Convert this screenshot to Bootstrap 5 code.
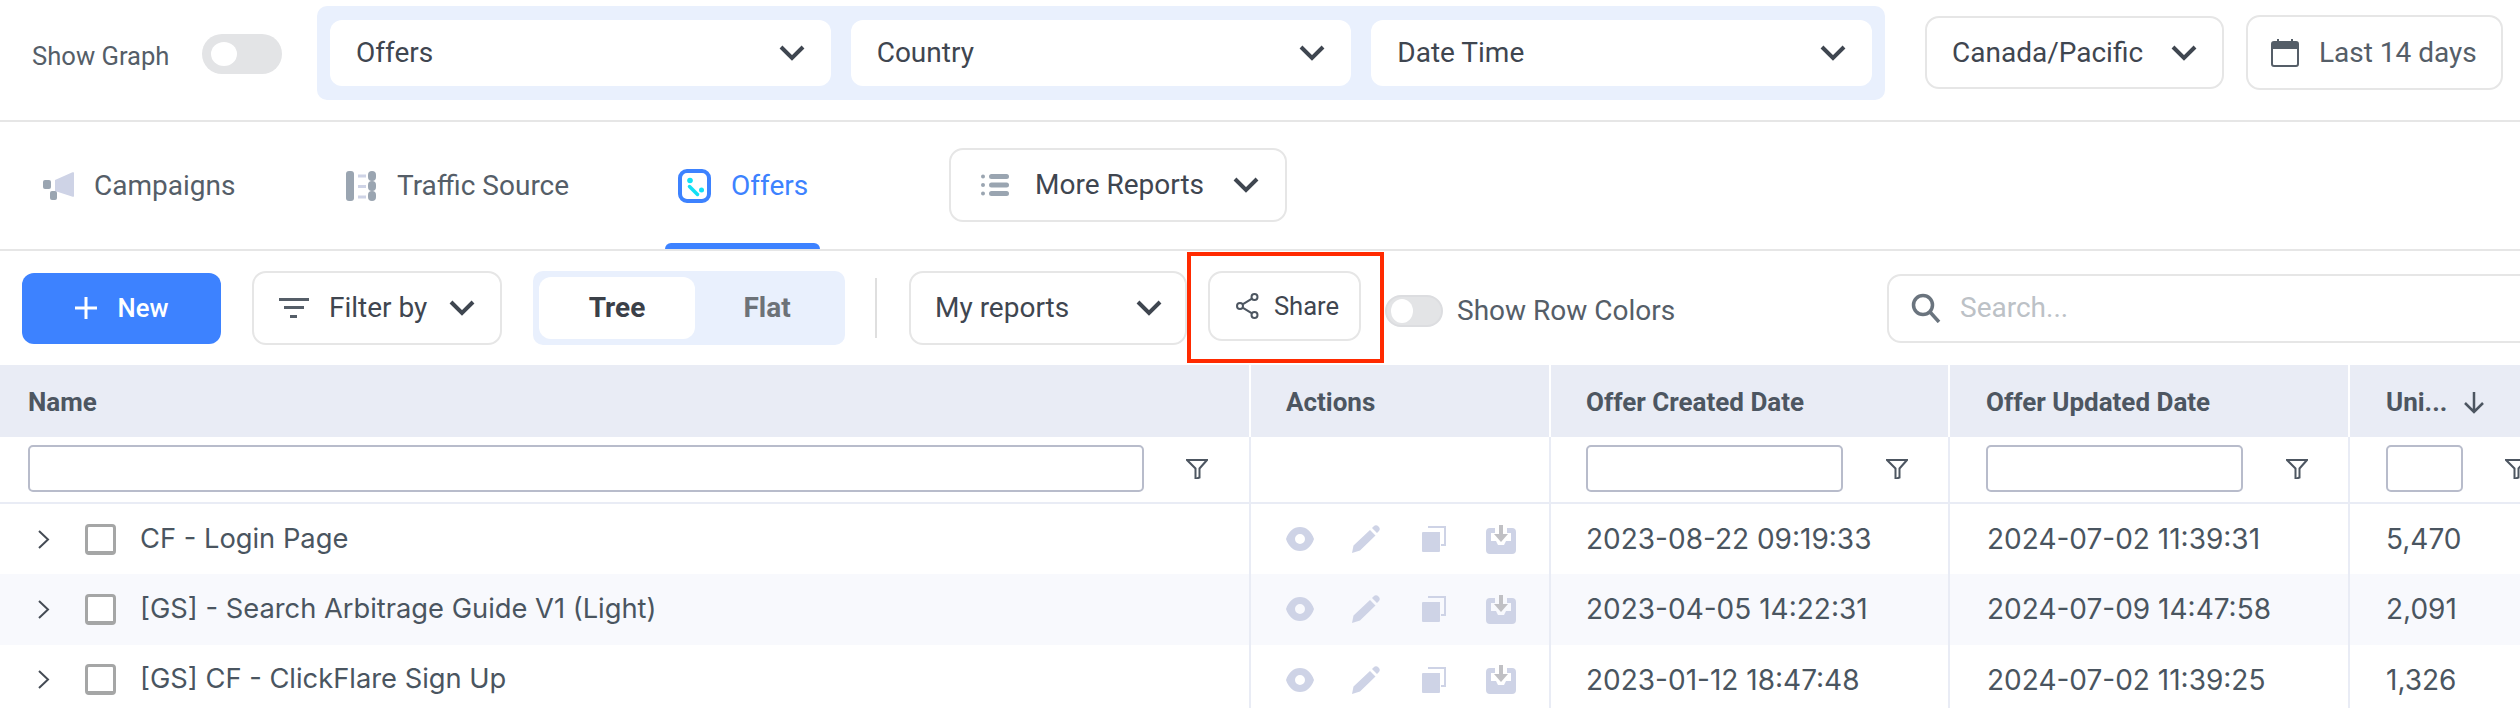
<!DOCTYPE html>
<html lang="en">
<head>
  <meta charset="UTF-8">
  <meta name="viewport" content="width=device-width, initial-scale=1.0">
  <title>Offers</title>
  <link href="https://cdn.jsdelivr.net/npm/bootstrap@5.3.0/dist/css/bootstrap.min.css" rel="stylesheet">
  <style>
    html, body { height: 708px; overflow: hidden; }
    body { font-family: Roboto, "Liberation Sans", sans-serif; font-size: 28px; color: #3f4650; background: #fff; width: 2520px; }

    /* top bar */
    .top-bar { height: 122px; padding: 6px 0 0 32px; border-bottom: 2px solid #e6e6e6; }
    .graph-label { width: 138px; font-size: 25.6px; color: #555e68; margin-top: 35px; line-height: 30px; white-space: nowrap; }
    .pill-switch { display: block; background: #e3e4e6; border-radius: 20px; position: relative; flex-shrink: 0; }
    .pill-switch::before { content: ""; position: absolute; background: #fff; border-radius: 50%; }
    .pill-lg { width: 80px; height: 40px; margin: 28px 0 0 32px; }
    .pill-lg::before { left: 9px; top: 8px; width: 26px; height: 24px; }
    .pill-sm { width: 58px; height: 32px; border: 2px solid #dcdde0; margin: 6px 0 0 0; }
    .pill-sm::before { left: 4px; top: 2px; width: 22px; height: 24px; }
    .filter-panel { width: 1568px; height: 94px; margin-left: 35px; padding: 14px 13px; gap: 20px; background: #e9f0fd; border-radius: 10px; }
    .filter-select { flex: 1 1 0; height: 66px; padding: 0 26px; background: #fff; border-radius: 12px; }

    .box-btn { background: #fff; border: 2px solid #e6e6e6; border-radius: 14px; color: #3f4650; font-size: 28px; padding: 0; line-height: 32px; flex-shrink: 0; white-space: nowrap; }
    .box-btn:hover { background: #fff; border-color: #e6e6e6; color: #3f4650; }
    .zone-btn { width: 299px; height: 73px; margin: 10px 0 0 40px; padding: 0 25px; }
    .range-btn { width: 257px; height: 75px; margin: 9px 0 0 22px; padding-left: 23px; color: #555e68; }
    .range-btn svg { margin-right: 20px; }

    /* report tabs */
    .tab-bar { height: 129px; padding-left: 30px; border-bottom: 2px solid #e6e6e6; }
    .tab-link { position: relative; height: 127px; padding: 0 13px; color: #555e68; font-size: 28px; white-space: nowrap; }
    .tab-link:hover { color: #555e68; }
    .tab-link svg { margin-right: 20px; flex-shrink: 0; }
    .tab-link.active, .tab-link.active:hover { color: #3d82ff; }
    .tab-link.active::after { content: ""; position: absolute; left: 0; right: 0; bottom: 0; height: 6px; background: #3d82ff; border-radius: 6px 6px 0 0; }
    .tab-campaigns { width: 218px; }
    .tab-traffic { width: 249px; margin-left: 85px; }
    .tab-traffic svg { margin-right: 21px; }
    .tab-offers { width: 155px; margin-left: 83px; }
    .more-btn { width: 338px; height: 74px; margin: 26px 0 0 129px; padding: 0 26px 0 30px; }
    .more-btn svg:first-child { margin-right: 26px; }

    /* toolbar */
    .tool-bar { height: 114px; padding-left: 22px; overflow: hidden; }
    .new-btn { width: 199px; height: 71px; background: #3d82ff; border: 0; border-radius: 12px; color: #fff; font-size: 25.6px; font-weight: 500; gap: 21px; }
    .new-btn:hover { background: #3d82ff; color: #fff; }
    .filter-btn { width: 250px; height: 74px; margin-left: 31px; padding: 0 25px; }
    .filter-btn svg:first-child { margin-right: 20px; }
    .view-switch { width: 312px; height: 74px; margin-left: 31px; padding: 6px; background: #e9f0fd; border-radius: 10px; }
    .view-opt { flex: 1 1 0; border-radius: 12px; font-weight: 700; font-size: 28px; color: #6d7278; }
    .view-opt.on { flex: 0 0 156px; background: #fff; color: #3b4048; }
    .tool-sep { width: 2px; height: 60px; margin-left: 30px; background: #dfdfdf; }
    .reports-btn { width: 278px; height: 74px; margin-left: 32px; padding: 0 23px 0 24px; }
    .share-wrap { position: relative; margin: -4px 0 0 21px; flex-shrink: 0; }
    .share-btn { width: 153px; height: 70px; font-size: 25.6px; gap: 15px; padding-left: 6px; }
    .red-mark { position: absolute; left: -21px; top: -19px; width: 197px; height: 111px; border: 4px solid #ff2a00; pointer-events: none; }
    .row-colors { width: 288px; margin-left: 24px; }
    .row-colors span { font-size: 28px; color: #555e68; margin: 6px 0 0 14px; white-space: nowrap; }
    .search-box { width: 700px; height: 69px; margin-left: 214px; padding-left: 22px; border: 2px solid #e6e6e6; border-radius: 14px; gap: 19px; flex-shrink: 0; }
    .search-box input { border: 0; outline: 0; padding: 0; font-size: 28px; width: 400px; color: #3f4650; }
    .search-box input::placeholder { color: #bcc1c6; }

    /* report table */
    .report-table { table-layout: fixed; width: 2520px; margin: 0; border-collapse: separate; border-spacing: 0; --bs-table-bg: transparent; }
    .report-table > :not(caption) > * > * { padding: 0; border: 0; box-shadow: none; vertical-align: middle; }
    .report-table thead tr.head-row th { height: 72px; background: #e9ecf5; color: #4d5661; font-size: 26px; font-weight: 700; padding: 3px 0 0 35px; border-left: 2px solid #fff; }
    .report-table thead tr.head-row th:first-child { padding-left: 28px; border-left: 0; }
    .report-table thead tr.head-row th:nth-child(4), .report-table thead tr.head-row th:last-child { padding-left: 36px; }
    .report-table tr.find-row td { height: 67px; border-bottom: 2px solid #e9ecf5; border-left: 2px solid #e9ecf5; padding: 0 0 2px 36px; }
    .report-table tr.find-row td:first-child { border-left: 0; padding-left: 28px; }
    .report-table tr.find-row td:nth-child(3) { padding-left: 35px; }
    .find-input { height: 47px; border: 2px solid #b8bccb; border-radius: 5px; padding: 0 8px; background: #fff; flex-shrink: 0; }
    .find-input:focus { box-shadow: none; border-color: #b8bccb; }
    .find-name { width: 1116px; margin-right: 42px; }
    .find-date { width: 257px; margin-right: 43px; }
    .find-unit { width: 77px; margin-right: 42px; }
    .funnel { flex-shrink: 0; }
    .report-table tbody td { height: 70.3px; font-family: Inter, "Liberation Sans", sans-serif; font-size: 28px; color: #4a5560; border-left: 2px solid #e9ecf5; padding-left: 37px; white-space: nowrap; }
    .report-table tbody tr:nth-child(even) td { background: #f8f9fd; }
    .report-table tbody td:first-child { border-left: 0; padding-left: 37px; }
    .report-table tbody td:nth-child(2), .report-table tbody td:nth-child(3) { padding-left: 35px; }
    .report-table tbody td:last-child { padding-left: 36px; }
    .row-name { font-size: 27.3px; }
    .row-check { width: 31px; height: 31px; border: 3px solid #a5a6a6; border-bottom-width: 4px; border-radius: 4px; margin: 0 24px 0 35px; background: #fff; flex-shrink: 0; }
    .act-icons { gap: 38px; }
    .act-icons svg:nth-child(3) { margin-left: 4px; }
    .act-icons svg:nth-child(4) { margin-left: 2px; }
  </style>
</head>
<body>
  <svg width="0" height="0" class="position-absolute">
    <defs>
      <symbol id="chev" viewBox="0 0 26 16"><path d="M2 2l11 11L24 2" fill="none" stroke="#3f4650" stroke-width="4"/></symbol>
      <symbol id="funnel" viewBox="0 0 22 20"><path d="M1 1h20l-7.500 8.500v9l-4 1.500V9.500z" fill="none" stroke="#4d5661" stroke-width="2"/></symbol>
      <symbol id="eye" viewBox="0 0 28 24"><path fill="#ced3e6" fill-rule="evenodd" d="M14 0C7.500 0 2.500 4.500 0 12c2.500 7.500 7.500 12 14 12s11.500-4.500 14-12C25.500 4.500 20.500 0 14 0zm0 7a5 5 0 110 10 5 5 0 010-10z"/></symbol>
      <symbol id="pen" viewBox="0 0 28 28"><path fill="#ced3e6" d="M18 5l5.500 5.500L8 25.500 0 28l1.500-7.500zM20 3l1.500-1.500a3.500 3.500 0 015 0 3.500 3.500 0 010 5L25 8z"/></symbol>
      <symbol id="copy" viewBox="0 0 24 26"><path fill="#ced3e6" d="M6 0h18v20h-5V18h3V2H6z"/><path fill="#ced3e6" d="M0 7a1 1 0 011-1h17v19a1 1 0 01-1 1H1a1 1 0 01-1-1z"/></symbol>
      <symbol id="inbox" viewBox="0 0 30 29"><path fill="#ced3e6" d="M4 3h5v5H5v8h5l2 4h6l2-4h5V8h-4V3h5a4 4 0 014 4v18a4 4 0 01-4 4H4a4 4 0 01-4-4V7a4 4 0 014-4z"/><path fill="#c0c0c4" d="M13 0h4v9h5l-7 8-7-8h5z"/></symbol>
    </defs>
  </svg>

  <div class="top-bar d-flex align-items-start">
    <span class="graph-label">Show Graph</span>
    <span class="pill-switch pill-lg"></span>
    <div class="filter-panel d-flex">
      <div class="filter-select d-flex align-items-center justify-content-between"><span>Offers</span><svg width="26" height="16"><use href="#chev"/></svg></div>
      <div class="filter-select d-flex align-items-center justify-content-between"><span>Country</span><svg width="26" height="16"><use href="#chev"/></svg></div>
      <div class="filter-select d-flex align-items-center justify-content-between"><span>Date Time</span><svg width="26" height="16"><use href="#chev"/></svg></div>
    </div>
    <button class="btn box-btn zone-btn d-flex align-items-center justify-content-between"><span>Canada/Pacific</span><svg width="26" height="16"><use href="#chev"/></svg></button>
    <button class="btn box-btn range-btn d-flex align-items-center">
      <svg width="28" height="28" viewBox="0 0 28 28"><rect x="1" y="3" width="26" height="24" rx="2" fill="none" stroke="#555e68" stroke-width="2"/><path fill="#555e68" d="M1 3h26v7H1zM6 0h2v3H6zM20 0h2v3h-2z"/></svg>
      <span>Last 14 days</span>
    </button>
  </div>

  <div class="tab-bar d-flex align-items-start">
    <a class="tab-link tab-campaigns d-flex align-items-center text-decoration-none" href="#">
      <svg width="31" height="28" viewBox="0 0 31 28"><path fill="#ced3e6" d="M12 8L29.500 .3a1 1 0 011.500 1v22.400a1 1 0 01-1.300 1L12 19z"/><rect y="8" width="8" height="9" rx="2" fill="#9aa5b1"/><rect x="7" y="19" width="7" height="9" rx="2" fill="#9aa5b1"/></svg>
      Campaigns
    </a>
    <a class="tab-link tab-traffic d-flex align-items-center text-decoration-none" href="#">
      <svg width="30" height="30" viewBox="0 0 30 30"><rect width="8" height="30" rx="3" fill="#9aa5b1"/><rect x="22" width="8" height="10" rx="4" fill="#9aa5b1"/><rect x="22" y="10" width="8" height="10" rx="4" fill="#9aa5b1"/><rect x="22" y="20" width="8" height="10" rx="4" fill="#9aa5b1"/><path fill="#ced3e6" d="M12 3.500h8v3h-8zM12 14h8v3h-8zM12 24.500h8v3h-8z"/></svg>
      Traffic Source
    </a>
    <a class="tab-link tab-offers active d-flex align-items-center text-decoration-none" href="#">
      <svg width="33" height="34" viewBox="0 0 33 34"><rect x="2" y="2" width="29" height="30" rx="7" fill="#fff" stroke="#3d82ff" stroke-width="4"/><path d="M11.500 17.500l8 8" stroke="#12e0f5" stroke-width="3.500" stroke-linecap="round" fill="none"/><circle cx="12" cy="11.500" r="2.800" fill="#12e0f5"/><circle cx="23.500" cy="21" r="2.500" fill="#12e0f5"/></svg>
      Offers
    </a>
    <button class="btn box-btn more-btn d-flex align-items-center">
      <svg width="28" height="22" viewBox="0 0 28 22"><g fill="#9aa5b1"><circle cx="2" cy="2.500" r="2"/><circle cx="2" cy="11" r="2"/><circle cx="2" cy="19.500" r="2"/><rect x="8" width="20" height="5" rx="2.500"/><rect x="8" y="8.500" width="20" height="5" rx="2.500"/><rect x="8" y="17" width="20" height="5" rx="2.500"/></g></svg>
      <span class="me-auto">More Reports</span>
      <svg width="26" height="16"><use href="#chev"/></svg>
    </button>
  </div>

  <div class="tool-bar d-flex align-items-center">
    <button class="btn new-btn d-flex align-items-center justify-content-center flex-shrink-0">
      <svg width="22" height="22" viewBox="0 0 22 22"><path d="M11 0v22M0 11h22" stroke="#fff" stroke-width="3"/></svg>
      New
    </button>
    <button class="btn box-btn filter-btn d-flex align-items-center">
      <svg width="30" height="21" viewBox="0 0 30 21"><path fill="#555e68" d="M0 0h30v3H0zM5 8h20v3H5zM11 17h7v3h-7z"/></svg>
      <span class="me-auto">Filter by</span>
      <svg width="26" height="16"><use href="#chev"/></svg>
    </button>
    <div class="view-switch d-flex flex-shrink-0">
      <div class="view-opt on d-flex align-items-center justify-content-center">Tree</div>
      <div class="view-opt d-flex align-items-center justify-content-center">Flat</div>
    </div>
    <div class="tool-sep flex-shrink-0"></div>
    <button class="btn box-btn reports-btn d-flex align-items-center justify-content-between"><span>My reports</span><svg width="26" height="16"><use href="#chev"/></svg></button>
    <div class="share-wrap">
      <button class="btn box-btn share-btn d-flex align-items-center justify-content-center">
        <svg width="23" height="26" viewBox="0 0 23 26"><g fill="none" stroke="#4d5661" stroke-width="2"><circle cx="18.500" cy="4" r="3"/><circle cx="4" cy="13" r="3"/><circle cx="18.500" cy="22" r="3"/><path d="M7 11.200l9-5.500M7 14.800l9 5.500"/></g></svg>
        Share
      </button>
      <span class="red-mark"></span>
    </div>
    <div class="row-colors d-flex align-items-center flex-shrink-0">
      <div class="pill-switch pill-sm"></div>
      <span>Show Row Colors</span>
    </div>
    <div class="search-box d-flex align-items-center">
      <svg width="30" height="30" viewBox="0 0 30 30"><circle cx="12" cy="12" r="9.500" fill="none" stroke="#6a747e" stroke-width="3.500"/><path d="M19 19l9 10" stroke="#6a747e" stroke-width="3.500"/></svg>
      <input type="text" placeholder="Search...">
    </div>
  </div>

  <table class="table report-table">
    <colgroup><col style="width:1249px"><col style="width:300px"><col style="width:399px"><col style="width:400px"><col style="width:172px"></colgroup>
    <thead>
      <tr class="head-row">
        <th>Name</th>
        <th>Actions</th>
        <th>Offer Created Date</th>
        <th>Offer Updated Date</th>
        <th>
          <div class="d-flex align-items-center">Uni...
            <svg width="22" height="22" viewBox="0 0 22 22" class="ms-3"><path d="M11 0v20M2 11l9 9 9-9" fill="none" stroke="#4d5661" stroke-width="2.500"/></svg>
          </div>
        </th>
      </tr>
      <tr class="find-row">
        <td><div class="d-flex align-items-center"><input class="form-control find-input find-name"><svg class="funnel" width="22" height="20"><use href="#funnel"/></svg></div></td>
        <td></td>
        <td><div class="d-flex align-items-center"><input class="form-control find-input find-date"><svg class="funnel" width="22" height="20"><use href="#funnel"/></svg></div></td>
        <td><div class="d-flex align-items-center"><input class="form-control find-input find-date"><svg class="funnel" width="22" height="20"><use href="#funnel"/></svg></div></td>
        <td><div class="d-flex align-items-center"><input class="form-control find-input find-unit"><svg class="funnel" width="22" height="20"><use href="#funnel"/></svg></div></td>
      </tr>
    </thead>
    <tbody id="rows"></tbody>
  </table>

  <script>
    // rows of the report
    const offers = [
      { name: 'CF - Login Page', created: '2023-08-22 09:19:33', updated: '2024-07-02 11:39:31', unique: '5,470' },
      { name: '[GS] - Search Arbitrage Guide V1 (Light)', created: '2023-04-05 14:22:31', updated: '2024-07-09 14:47:58', unique: '2,091' },
      { name: '[GS] CF - ClickFlare Sign Up', created: '2023-01-12 18:47:48', updated: '2024-07-02 11:39:25', unique: '1,326' }
    ];
    const svg = (id, w, h) => `<svg width="${w}" height="${h}"><use href="#${id}"/></svg>`;
    document.getElementById('rows').innerHTML = offers.map(o => `
      <tr>
        <td><div class="d-flex align-items-center">
          <svg width="13" height="19" viewBox="0 0 13 19" class="flex-shrink-0"><path d="M2 1l9 8.500-9 8.500" fill="none" stroke="#444b54" stroke-width="2"/></svg>
          <span class="row-check"></span><span class="row-name">${o.name}</span>
        </div></td>
        <td><div class="d-flex align-items-center act-icons">${svg('eye', 28, 24)}${svg('pen', 28, 28)}${svg('copy', 24, 26)}${svg('inbox', 30, 29)}</div></td>
        <td>${o.created}</td>
        <td>${o.updated}</td>
        <td>${o.unique}</td>
      </tr>`).join('');
  </script>
  <script src="https://cdn.jsdelivr.net/npm/bootstrap@5.3.0/dist/js/bootstrap.bundle.min.js"></script>
</body>
</html>
